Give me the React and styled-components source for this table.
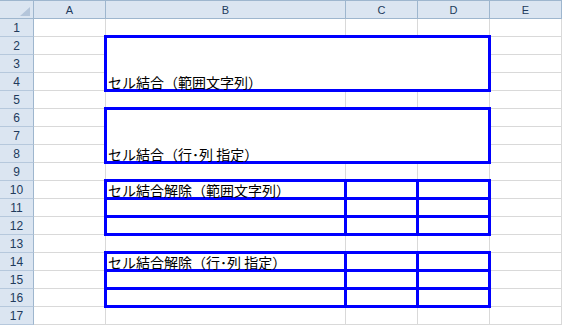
import React from "react";
import styled, { createGlobalStyle, css } from "styled-components";

const GlobalStyle = createGlobalStyle`
  html, body { margin: 0; padding: 0; background: #ffffff; overflow: hidden; }
  #root { width: 562px; height: 325px; }
`;

const COLS = ["A", "B", "C", "D", "E"];
const COL_WIDTHS = [72, 240, 72, 72, 72];
const ROW_COUNT = 17;

const HEADER_BG = "#dbe5f1";
const HEADER_LINE = "#9eb6ce";
const GRID_LINE = "#d9d9d9";
const BLUE = "#0000ff";

const Sheet = styled.div`
  display: grid;
  grid-template-columns: 34px ${COL_WIDTHS.map((w) => `${w}px`).join(" ")};
  grid-template-rows: 19px repeat(${ROW_COUNT}, 18px);
  width: 562px;
  background: #ffffff;
  font-family: "Noto Sans CJK JP", "Noto Sans", sans-serif;
`;

const Corner = styled.div`
  position: relative;
  box-sizing: border-box;
  background: ${HEADER_BG};
  border-top: 1px solid ${HEADER_LINE};
  border-bottom: 1px solid ${HEADER_LINE};
  border-right: 1px solid ${HEADER_LINE};
  display: flex;
  justify-content: flex-end;
  align-items: flex-end;
  padding: 0 3px 2px 0;
`;

const CornerMark = styled.svg`
  display: block;
  width: 10px;
  height: 9px;
`;

const ColHeader = styled.div`
  box-sizing: border-box;
  background: ${HEADER_BG};
  border-top: 1px solid ${HEADER_LINE};
  border-bottom: 1px solid ${HEADER_LINE};
  border-right: 1px solid ${HEADER_LINE};
  display: flex;
  align-items: center;
  justify-content: center;
  font-family: "Liberation Sans", Arial, sans-serif;
  font-size: 11px;
  color: #213a5c;
  line-height: 1;
  padding-top: 1px;
`;

const RowHeader = styled.div`
  box-sizing: border-box;
  background: ${HEADER_BG};
  border-right: 1px solid ${HEADER_LINE};
  border-bottom: 1px solid #b6c8dc;
  display: flex;
  align-items: center;
  justify-content: center;
  font-family: "Liberation Sans", Arial, sans-serif;
  font-size: 12px;
  color: #213a5c;
  line-height: 1;
`;

const Cell = styled.div`
  position: relative;
  box-sizing: border-box;
  border-right: 1px solid ${GRID_LINE};
  border-bottom: 1px solid ${GRID_LINE};
  display: flex;
  align-items: flex-end;
  padding: 0 0 0 2px;
  font-size: 14px;
  line-height: 17px;
  color: #000000;
  white-space: nowrap;
  grid-column: ${(p) => p.$col} / span ${(p) => p.$colSpan || 1};
  grid-row: ${(p) => p.$row} / span ${(p) => p.$rowSpan || 1};
  ${(p) =>
    p.$bordered &&
    css`
      &::after {
        content: "";
        position: absolute;
        left: -2px;
        top: -2px;
        right: -2px;
        bottom: -2px;
        border: 3px solid ${BLUE};
        z-index: 1;
        pointer-events: none;
      }
    `}
`;

const CellText = styled.span`
  position: relative;
  z-index: 2;
  margin-bottom: -1px;
`;

// Block definitions (rows are 1-based spreadsheet rows; cols are 1-based: A=1)
const merges = [
  { row: 2, col: 2, rowSpan: 3, colSpan: 3, text: "セル結合（範囲文字列）" },
  { row: 6, col: 2, rowSpan: 3, colSpan: 3, text: "セル結合（行･列 指定）" },
];

const boxedBlocks = [
  { startRow: 10, text: "セル結合解除（範囲文字列）" },
  { startRow: 14, text: "セル結合解除（行･列 指定）" },
];

function buildCells() {
  const covered = new Set();
  const cells = [];
  merges.forEach((m) => {
    for (let r = m.row; r < m.row + m.rowSpan; r++)
      for (let c = m.col; c < m.col + m.colSpan; c++) covered.add(`${r}-${c}`);
    cells.push({ ...m, bordered: true, key: `m-${m.row}-${m.col}` });
  });
  const boxed = new Map();
  boxedBlocks.forEach((b) => {
    for (let r = b.startRow; r < b.startRow + 3; r++)
      for (let c = 2; c <= 4; c++)
        boxed.set(`${r}-${c}`, r === b.startRow && c === 2 ? b.text : "");
  });
  for (let r = 1; r <= ROW_COUNT; r++) {
    for (let c = 1; c <= COLS.length; c++) {
      const k = `${r}-${c}`;
      if (covered.has(k)) continue;
      const isBoxed = boxed.has(k);
      cells.push({
        row: r,
        col: c,
        rowSpan: 1,
        colSpan: 1,
        bordered: isBoxed,
        text: isBoxed ? boxed.get(k) : "",
        key: `c-${k}`,
      });
    }
  }
  return cells;
}

export default function App() {
  const cells = buildCells();
  return (
    <>
      <GlobalStyle />
      <Sheet>
        <Corner>
          <CornerMark viewBox="0 0 10 9">
            <polygon points="10,0 10,9 0,9" fill="#b4c5da" />
          </CornerMark>
        </Corner>
        {COLS.map((c) => (
          <ColHeader key={c}>{c}</ColHeader>
        ))}
        {Array.from({ length: ROW_COUNT }, (_, i) => (
          <RowHeader key={`rh-${i}`} style={{ gridRow: i + 2, gridColumn: 1 }}>
            {i + 1}
          </RowHeader>
        ))}
        {cells.map((cell) => (
          <Cell
            key={cell.key}
            $row={cell.row + 1}
            $col={cell.col + 1}
            $rowSpan={cell.rowSpan}
            $colSpan={cell.colSpan}
            $bordered={cell.bordered}
          >
            {cell.text && <CellText>{cell.text}</CellText>}
          </Cell>
        ))}
      </Sheet>
    </>
  );
}
